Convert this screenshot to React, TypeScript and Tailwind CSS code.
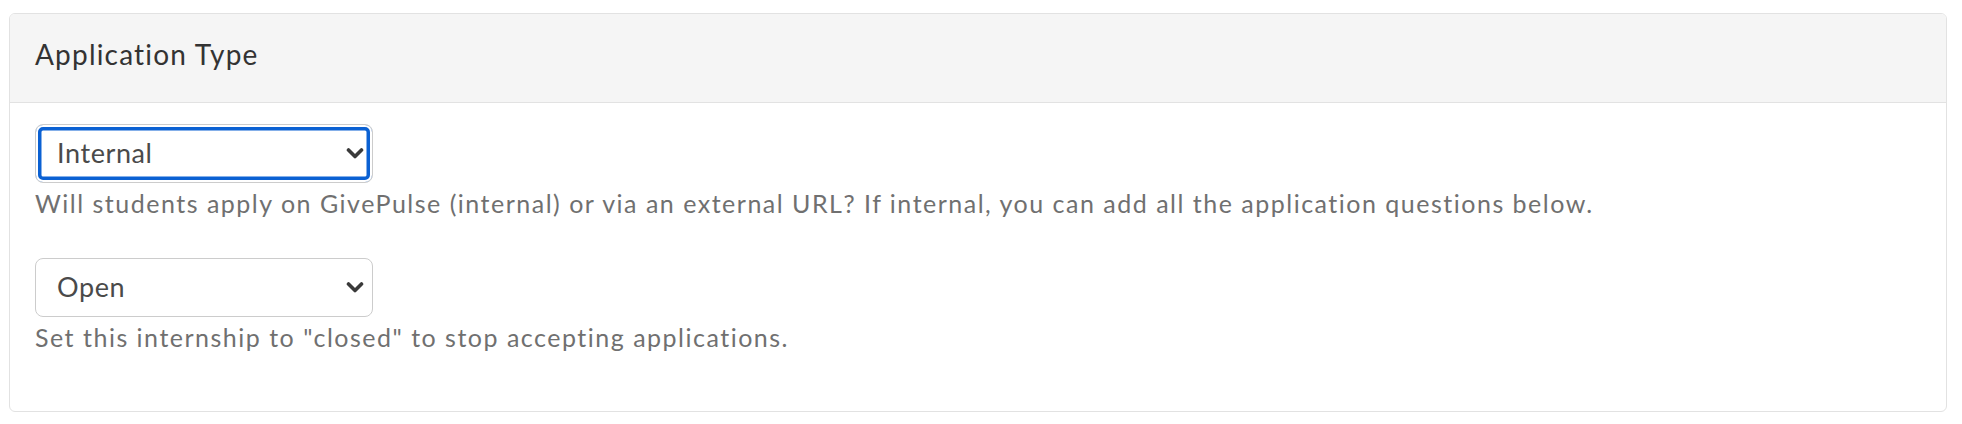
import { useState } from "react";

const Chevron = () => (
  <svg
    className="pointer-events-none absolute right-[9px] top-1/2 -translate-y-1/2"
    width="18"
    height="14"
    viewBox="0 0 18 14"
    fill="none"
  >
    <polyline
      points="2.5,3 9,9.5 15.5,3"
      stroke="#3a3a3a"
      strokeWidth="3.6"
      strokeLinecap="round"
      strokeLinejoin="round"
    />
  </svg>
);

type FieldProps = {
  value: string;
  options: string[];
  onChange: (v: string) => void;
  focused?: boolean;
  help: string;
};

const SelectField = ({ value, options, onChange, focused, help }: FieldProps) => (
  <div>
    <div className="relative w-[338px]">
      <select
        value={value}
        onChange={(e) => onChange(e.target.value)}
        className={
          "h-[59px] w-full appearance-none rounded-[8px] border border-[#cccccc] bg-white pl-[21px] pr-10 text-[27px] tracking-[0.6px] text-[#4a4a4a] outline-none " +
          (focused ? "shadow-[inset_0_0_0_2px_#ffffff,inset_0_0_0_5.5px_#0b61d3]" : "")
        }
      >
        {options.map((o) => (
          <option key={o}>{o}</option>
        ))}
      </select>
      <Chevron />
    </div>
    <p className="mt-[2px] text-[25px] leading-[36px] tracking-[1.5px] text-[#707070]">{help}</p>
  </div>
);

const App = () => {
  const [applyType, setApplyType] = useState("Internal");
  const [status, setStatus] = useState("Open");

  return (
    <div className="min-h-screen bg-white pl-[9px] pt-[13px] font-['Lato',_'Noto_Sans',_sans-serif]">
      <div className="w-[1938px] overflow-hidden rounded-[6px] border border-[#e2e2e2]">
        {/* Panel heading */}
        <div className="border-b border-[#e2e2e2] bg-[#f5f5f5] px-[25px] pb-[28px] pt-[20px]">
          <h3 className="text-[28px] leading-[40px] tracking-[1.2px] text-[#333333]">Application Type</h3>
        </div>

        {/* Panel body */}
        <div className="flex flex-col gap-[37px] px-[25px] pb-[56px] pt-[21px]">
          <SelectField
            value={applyType}
            options={["Internal", "External"]}
            onChange={setApplyType}
            focused
            help="Will students apply on GivePulse (internal) or via an external URL? If internal, you can add all the application questions below."
          />
          <SelectField
            value={status}
            options={["Open", "Closed"]}
            onChange={setStatus}
            help={'Set this internship to "closed" to stop accepting applications.'}
          />
        </div>
      </div>
    </div>
  );
};

export default App;
